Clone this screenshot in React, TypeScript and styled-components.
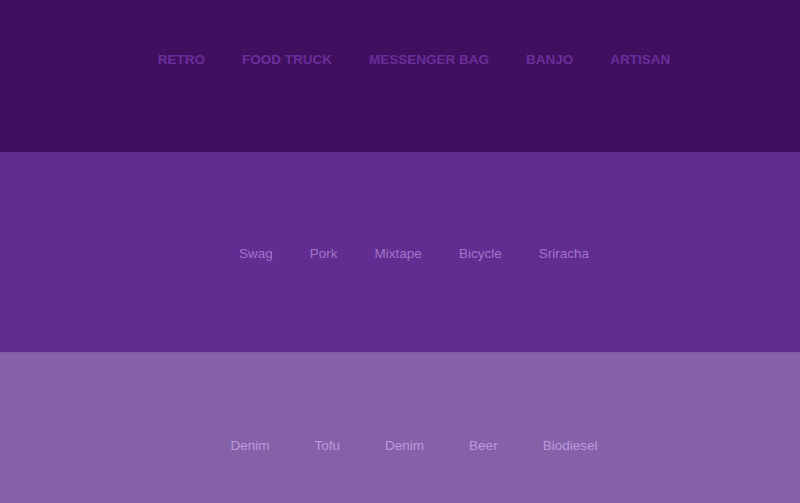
import styled, { createGlobalStyle } from "styled-components";

const GlobalStyle = createGlobalStyle`
  html, body {
    margin: 0;
    padding: 0;
    height: 100%;
    overflow: hidden;
  }
  body {
    font-family: "Liberation Sans", Arial, sans-serif;
  }
`;

const Page = styled.div`
  display: flex;
  flex-direction: column;
  height: 503px;
`;

const Band = styled.section<{ $bg: string; $height: string; $padTop: number }>`
  display: flex;
  justify-content: center;
  align-items: flex-start;
  box-sizing: border-box;
  height: ${(p) => p.$height};
  flex-shrink: 0;
  padding-top: ${(p) => p.$padTop}px;
  background-color: ${(p) => p.$bg};
  border-top: 1px solid rgba(0, 0, 0, 0.06);
  &:first-child {
    border-top: none;
  }
`;

const Menu = styled.ul<{ $gap: number }>`
  display: flex;
  gap: ${(p) => p.$gap}px;
  list-style: none;
  margin: 0;
  padding: 0 0 0 28px;
`;

const Item = styled.li<{ $color: string; $bold?: boolean }>`
  font-size: 13.5px;
  line-height: 16px;
  color: ${(p) => p.$color};
  font-weight: ${(p) => (p.$bold ? 700 : 400)};
  text-transform: ${(p) => (p.$bold ? "uppercase" : "none")};
  cursor: pointer;
`;

const top = ["Retro", "Food Truck", "Messenger Bag", "Banjo", "Artisan"];
const middle = ["Swag", "Pork", "Mixtape", "Bicycle", "Sriracha"];
const bottom = ["Denim", "Tofu", "Denim", "Beer", "Biodiesel"];

export default function App() {
  return (
    <>
      <GlobalStyle />
      <Page>
        <Band $bg="#410f5f" $height="152px" $padTop={52}>
          <Menu $gap={37}>
            {top.map((t) => (
              <Item key={t} $color="#692e9b" $bold>
                {t}
              </Item>
            ))}
          </Menu>
        </Band>
        <Band $bg="#622d90" $height="200px" $padTop={93}>
          <Menu $gap={37}>
            {middle.map((t) => (
              <Item key={t} $color="#a075c8">
                {t}
              </Item>
            ))}
          </Menu>
        </Band>
        <Band $bg="#8562a8" $height="151px" $padTop={85}>
          <Menu $gap={45}>
            {bottom.map((t, i) => (
              <Item key={i} $color="#bc9adf">
                {t}
              </Item>
            ))}
          </Menu>
        </Band>
      </Page>
    </>
  );
}
